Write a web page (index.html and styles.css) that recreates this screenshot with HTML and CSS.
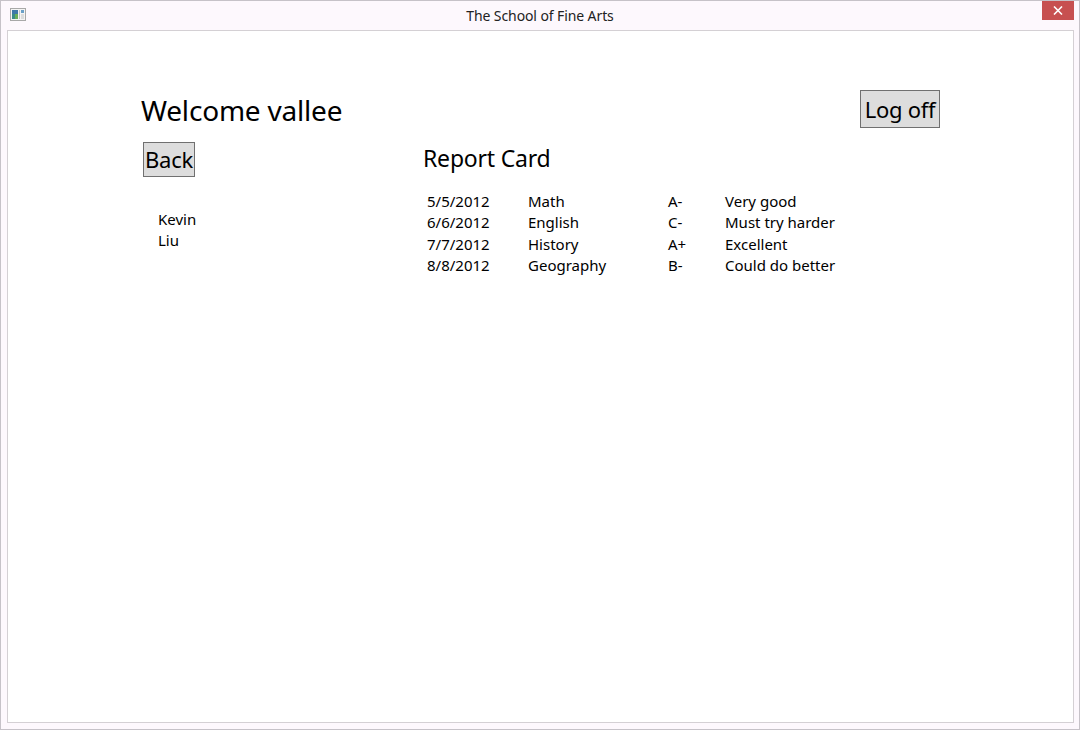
FILE: index.html
```html
<!DOCTYPE html>
<html>
<head>
<meta charset="utf-8">
<link rel="stylesheet" href="styles.css">
<title>The School of Fine Arts</title>
</head>
<body>
<div class="window">
  <div class="titlebar">
    <svg class="appicon" width="16" height="13" viewBox="0 0 16 13">
      <rect x="0.5" y="0.5" width="15" height="12" fill="#f4f4f4" stroke="#a8a8a8"/>
      <rect x="2" y="2" width="6" height="9" fill="#3a8a8a"/>
      <rect x="2" y="2" width="6" height="4" fill="#3f78a8"/>
      <rect x="5" y="6" width="3" height="5" fill="#6aae5a"/>
      <rect x="9" y="2" width="1" height="9" fill="#c8c8c8"/>
      <rect x="11" y="2" width="3" height="3" fill="#6aa0c8"/>
      <rect x="11" y="6" width="3" height="5" fill="#dcdcdc"/>
    </svg>
    <div class="title">The School of Fine Arts</div>
    <div class="close">
      <svg width="10" height="9" viewBox="0 0 10 9"><path d="M1 0.5 L9 8.5 M9 0.5 L1 8.5" stroke="#fff" stroke-width="1.6"/></svg>
    </div>
  </div>
  <div class="client">
    <div class="header">
      <h1 class="welcome">Welcome vallee</h1>
      <button class="btn logoff">Log off</button>
    </div>
    <div class="main">
      <div class="left">
        <button class="btn back">Back</button>
        <div class="names">
          <div>Kevin</div>
          <div>Liu</div>
        </div>
      </div>
      <div class="right">
        <h2 class="report-title">Report Card</h2>
        <div class="grades">
          <span>5/5/2012</span><span>Math</span><span>A-</span><span>Very good</span>
          <span>6/6/2012</span><span>English</span><span>C-</span><span>Must try harder</span>
          <span>7/7/2012</span><span>History</span><span>A+</span><span>Excellent</span>
          <span>8/8/2012</span><span>Geography</span><span>B-</span><span>Could do better</span>
        </div>
      </div>
    </div>
  </div>
</div>
</body>
</html>
```
FILE: styles.css
```css
* { box-sizing: border-box; }
html, body { margin: 0; padding: 0; }
body {
  width: 1080px;
  height: 730px;
  font-family: "Noto Sans", "Open Sans", sans-serif;
  color: #000;
  background: #fdf8fd;
}
.window {
  width: 1080px;
  height: 730px;
  border: 1px solid #c6c2c8;
  background: #fdf8fd;
  display: flex;
  flex-direction: column;
}
.titlebar {
  height: 29px;
  position: relative;
  display: flex;
  align-items: center;
  justify-content: center;
}
.appicon {
  position: absolute;
  left: 9px;
  top: 7px;
}
.title {
  font-size: 14px;
  color: #222;
  letter-spacing: -0.1px;
  margin-top: -1px;
}
.close {
  position: absolute;
  right: 5px;
  top: 0;
  width: 32px;
  height: 19px;
  background: #c75050;
  display: flex;
  align-items: center;
  justify-content: center;
}
.client {
  margin: 0 5px 0 6px;
  height: 693px;
  border: 1px solid #d4d0d4;
  background: #fff;
  padding: 0 133px 0 132px;
}
.header {
  display: flex;
  justify-content: space-between;
  align-items: flex-start;
  padding-top: 59px;
}
.welcome {
  margin: 5px 0 0 1px;
  font-size: 28px;
  font-weight: normal;
  line-height: 30px;
  letter-spacing: -0.2px;
}
.btn {
  font-family: inherit;
  background: #dddddd;
  border: 1px solid #707070;
  color: #000;
  padding: 0;
  margin: 0;
}
.logoff {
  width: 80px;
  height: 38px;
  font-size: 22px;
  line-height: 36px;
  letter-spacing: -0.3px;
}
.main {
  display: flex;
  margin-top: 14px;
}
.left {
  width: 282px;
  padding-left: 3px;
}
.back {
  width: 52px;
  height: 35px;
  font-size: 22px;
  line-height: 33px;
  letter-spacing: -0.3px;
}
.names {
  margin-top: 32px;
  padding-left: 15px;
  font-size: 15px;
  line-height: 21px;
}
.right {
  padding-top: 1px;
  margin-left: 1px;
}
.report-title {
  margin: 0;
  font-size: 23px;
  font-weight: normal;
  line-height: 30px;
  letter-spacing: -0.2px;
}
.grades {
  margin-top: 18px;
  margin-left: 4px;
  display: grid;
  grid-template-columns: 101px 140px 57px auto;
  font-size: 15px;
  line-height: 21.3px;
}
```
